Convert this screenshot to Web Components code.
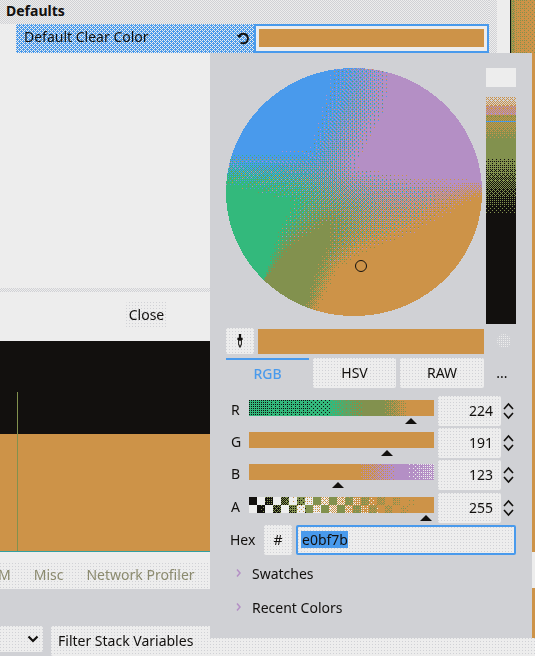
<!DOCTYPE html>
<html>
<head>
<meta charset="utf-8">
<style>
	html, body { margin: 0; height: 656px; overflow: hidden; }
	body {
		position: relative;
		background: #d0d1d5;
		color: #12100e;
		font: 14px "Noto Sans", "Liberation Sans", sans-serif;
	}
</style>
</head>
<body>
	<editor-back></editor-back>
	<color-picker></color-picker>

<script>
const COLORS = {
	g: "#33b97c", o: "#82914e", y: "#cd9348", p: "#b48fc5",
	b: "#499aec", k: "#12100e", l: "#ededed", s: "#d0d1d5"
}
const B4 = [0,8,2,10,12,4,14,6,3,11,1,9,15,7,13,5]
const bayer = (x, y) => (B4[(y % 4) * 4 + x % 4] + .5) / 16
const dot = c => `conic-gradient(at 1px 1px, transparent 270deg, ${c} 270deg)`
const SPECK = `${dot("#d0d1d5")} 0 0/3px 3px, #ededed`
const CHECK = (a, b) => `${dot(b)} 0 0/2px 2px, ${dot(b)} 1px 1px/2px 2px, ${a}`

// every strip is a list of segments: from to colourA colourB chanceStart chanceEnd
const STRIPS = {
	red: "0 .44 g k .25 .12;.44 .62 g o .1 1;.62 .73 o o 0 0;.73 .86 o y 0 1;.86 1 y y 0 0",
	green: "0 1 y y 0 0",
	blue: "0 .58 y y 0 0;.58 .8 y p 0 1;.8 .86 p p 0 0;.86 1 p l .05 .35",
	value: "0 .04 s y .3 .6;.04 .08 y p .4 .6;.08 .105 o y .4 .5;.105 .11 b b 0 0;.11 .2 o y .55 0;.2 .27 o o 0 0;.27 .53 o k .12 1;.53 1 k k 0 0",
	edge: "0 .05 k k 0 0;.05 .2 o y .1 .6;.2 1 y o .2 .12",
	selected: "0 1 b l .38 .38"
}

class DitherStrip extends HTMLElement {
	connectedCallback() {
		const w = +this.getAttribute("w"), h = +this.getAttribute("h")
		const vertical = this.hasAttribute("vertical")
		const segs = STRIPS[this.getAttribute("kind")].split(";").map(s => s.split(" "))
		this.attachShadow({ mode: "open" }).innerHTML = `
			<style>:host { display: block; } canvas { display: block; }</style>
			<canvas width="${w}" height="${h}"></canvas>`
		const ctx = this.shadowRoot.querySelector("canvas").getContext("2d")
		for (let y = 0; y < h; y++) for (let x = 0; x < w; x++) {
			const f = vertical ? (y + .5) / h : (x + .5) / w
			const seg = segs.find(s => f < +s[1]) || segs[segs.length - 1]
			const t = (f - seg[0]) / (seg[1] - seg[0])
			const chance = +seg[4] + (seg[5] - seg[4]) * t
			ctx.fillStyle = COLORS[bayer(x, y) < chance ? seg[3] : seg[2]]
			ctx.fillRect(x, y, 1, 1)
		}
	}
}
customElements.define("dither-strip", DitherStrip)

// checker behind the alpha slider, fading into the picked colour
class AlphaStrip extends HTMLElement {
	connectedCallback() {
		this.attachShadow({ mode: "open" }).innerHTML = `
			<style>:host { display: block; } canvas { display: block; }</style>
			<canvas width="185" height="16"></canvas>`
		const ctx = this.shadowRoot.querySelector("canvas").getContext("2d")
		for (let y = 0; y < 16; y++) for (let x = 0; x < 185; x++) {
			const dark = ((x >> 3) + (y >> 3)) % 2 == 0
			const f = x / 185, d = bayer(x, y)
			let c
			if (dark) {
				if (f < .42) c = d < (f - .04) / .28 ? "o" : "k"
				else c = d < (f - .5) / .4 ? "y" : "o"
			} else {
				c = d < (f - .22) / .5 ? "y" : "l"
			}
			ctx.fillStyle = COLORS[c]
			ctx.fillRect(x, y, 1, 1)
		}
	}
}
customElements.define("alpha-strip", AlphaStrip)

// solid patches traced from the wheel, pixels between them get dithered
const PATCHES = [
	["b", [[350,50],[330,150],[290,290],[90,300],[0,300],[0,0],[350,0]]],
	["p", [[555,70],[545,180],[450,340],[560,360],[820,385],[900,385],[900,0],[555,0]]],
	["y", [[320,790],[390,660],[480,610],[620,560],[800,450],[900,450],[900,900],[320,900]]],
	["o", [[170,680],[240,600],[350,530],[340,590],[300,680],[280,770],[280,900],[100,900]]],
	["g", [[0,400],[240,460],[200,530],[160,680],[0,680]]]
]

function patchDist(px, py, pts) {
	let inside = false, best = 1e9
	for (let i = 0, j = pts.length - 1; i < pts.length; j = i++) {
		const [ax, ay] = pts[i], [bx, by] = pts[j]
		if ((ay > py) != (by > py) && px < (bx - ax) * (py - ay) / (by - ay) + ax) inside = !inside
		const dx = bx - ax, dy = by - ay
		const u = Math.max(0, Math.min(1, ((px - ax) * dx + (py - ay) * dy) / (dx * dx + dy * dy)))
		best = Math.min(best, Math.hypot(px - ax - u * dx, py - ay - u * dy))
	}
	return inside ? 0 : best
}

class ColorWheel extends HTMLElement {
	connectedCallback() {
		this.attachShadow({ mode: "open" }).innerHTML = `
			<style>
				:host { display: block; position: relative; width: 256px; height: 248px; }
				canvas { display: block; }
				i {
					position: absolute; left: 129px; top: 192px;
					width: 10px; height: 10px;
					border: 1px solid #12100e; border-radius: 50%;
				}
			</style>
			<canvas width="256" height="248"></canvas><i></i>`
		const ctx = this.shadowRoot.querySelector("canvas").getContext("2d")
		for (let y = 0; y < 248; y++) for (let x = 0; x < 256; x++) {
			if (Math.hypot((x + .5 - 128) / 128, (y + .5 - 124) / 124) > 1) continue
			const zx = 48 + 3 * x, zy = 54 + 3 * y
			const dist = PATCHES.map(p => patchDist(zx, zy, p[1]))
			const hit = dist.indexOf(0)
			let pick = hit
			if (hit < 0) {
				const weights = dist.map(d => 1 / Math.pow(d, 1.5))
				const total = weights.reduce((a, b) => a + b)
				let run = 0, d = bayer(x, y)
				pick = weights.findIndex(w => (run += w / total) > d)
				if (pick < 0) pick = 4
			}
			ctx.fillStyle = COLORS[PATCHES[pick][0]]
			ctx.fillRect(x, y, 1, 1)
		}
	}
}
customElements.define("color-wheel", ColorWheel)

class SliderRow extends HTMLElement {
	connectedCallback() {
		const label = this.getAttribute("label")
		const value = this.getAttribute("value")
		const kind = this.getAttribute("kind")
		const grabber = this.getAttribute("grabber")
		const strip = kind == "alpha" ? `<alpha-strip></alpha-strip>` : `<dither-strip kind="${kind}" w="185" h="16"></dither-strip>`
		this.attachShadow({ mode: "open" }).innerHTML = `
			<style>
				:host {
					display: grid;
					grid-template-columns: 19px 185px 63px 13px;
					column-gap: 4px;
					height: 30px;
				}
				.track { position: relative; height: 16px; margin-top: 4px; }
				.track i {
					position: absolute; top: 18px; left: ${grabber}px;
					width: 0; height: 0;
					border: 6px solid transparent; border-top: 0;
					border-bottom: 6px solid #12100e;
				}
				label { padding-left: 5px; line-height: 27px; }
				.num {
					height: 30px; box-sizing: border-box;
					padding: 0 8px 2px 0;
					display: flex; align-items: center; justify-content: flex-end;
					background: ${SPECK}; border-radius: 2px;
				}
				svg { display: block; margin: 5px 0 0 -3px; }
			</style>
			<label>${label}</label>
			<div class="track">${strip}<i></i></div>
			<div class="num">${value}</div>
			<svg width="13" height="20" viewBox="0 0 13 20" fill="none" stroke="#12100e" stroke-width="1.600">
				<path d="M2 8 6.500 3 11 8M2 12l4.500 5 4.500-5"/>
			</svg>`
	}
}
customElements.define("slider-row", SliderRow)

class CollapseRow extends HTMLElement {
	connectedCallback() {
		this.attachShadow({ mode: "open" }).innerHTML = `
			<style>
				:host { display: flex; align-items: center; height: 34px; gap: 10px; padding-left: 10px; }
				svg { display: block; }
			</style>
			<svg width="6" height="10" viewBox="0 0 6 10" fill="none" stroke="#b48fc5" stroke-width="1.500">
				<path d="M1 1.500 4 5 1 8.500"/>
			</svg>
			<slot></slot>`
	}
}
customElements.define("collapse-row", CollapseRow)

class ColorPicker extends HTMLElement {
	connectedCallback() {
		this.attachShadow({ mode: "open" }).innerHTML = `
			<style>
				:host {
					position: absolute; left: 210px; top: 53px;
					width: 322px; height: 585px;
					box-sizing: border-box;
					padding: 15px 16px 0;
					background: #d0d1d5;
					display: block;
				}
				.top { display: grid; grid-template-columns: 256px 30px; column-gap: 4px; height: 256px; }
				.value { display: flex; flex-direction: column; }
				.white { height: 19px; margin-bottom: 10px; background: #ededed; }
				.current {
					display: grid; grid-template-columns: 28px 226px 1fr;
					column-gap: 4px; align-items: center;
					height: 26px; margin-top: 4px;
				}
				.pick {
					height: 26px; background: ${SPECK}; border-radius: 2px;
					display: flex; align-items: center; justify-content: center;
				}
				.swatch { height: 25px; background: #cd9348; }
				.dots {
					width: 14px; height: 14px; margin-left: 9px;
					background: ${dot("#ededed")} 0 0/2px 2px;
					border-radius: 50%;
				}
				.tabs {
					display: grid; grid-template-columns: 83px 83px 84px 1fr;
					column-gap: 4px; height: 30px; margin-top: 4px;
				}
				.tab {
					display: flex; align-items: center; justify-content: center;
					padding-bottom: 2px; box-sizing: border-box;
					background: ${SPECK}; border-radius: 2px;
				}
				.tab.on {
					background: none; color: #499aec; font-weight: 500;
					border-top: 2px solid #499aec; border-radius: 0; padding-bottom: 2px;
				}
				.more { display: flex; align-items: center; justify-content: center; padding-bottom: 2px; }
				.sliders { display: flex; flex-direction: column; gap: 2px; margin-top: 8px; }
				.sliders slider-row:last-child { margin-top: 1px; }
				.hex {
					display: grid; grid-template-columns: 30px 28px 220px;
					column-gap: 4px; align-items: center;
					height: 30px; margin-top: 2px; margin-left: 4px;
				}
				.hex > span { padding-bottom: 2px; }
				.hash {
					height: 30px; padding-bottom: 2px; box-sizing: border-box;
					display: flex; align-items: center; justify-content: center;
					background: ${SPECK}; border-radius: 2px;
				}
				.field {
					height: 30px; box-sizing: border-box;
					border: 2px solid #499aec; border-radius: 2px;
					background: ${SPECK};
					padding: 0 0 1px 3px;
					display: flex; align-items: center;
				}
				.field span { background: #499aec; line-height: 17px; padding: 0 0 0 1px; }
				.fold { margin-top: 1px; }
			</style>
			<div class="top">
				<color-wheel></color-wheel>
				<div class="value">
					<div class="white"></div>
					<dither-strip kind="value" vertical w="30" h="227"></dither-strip>
				</div>
			</div>
			<div class="current">
				<div class="pick">
					<svg width="6" height="16" viewBox="0 0 8 19">
						<path d="M2.500 0h3v5H7.500v3H6.500v6L4 19 1.500 14V8H.5V5h2z" fill="#12100e"/>
						<path d="M2.800 9h2.400v4.500L4 16l-1.200-2.500z" fill="#ededed"/>
					</svg>
				</div>
				<div class="swatch"></div>
				<div class="dots"></div>
			</div>
			<div class="tabs">
				<div class="tab on">RGB</div>
				<div class="tab">HSV</div>
				<div class="tab">RAW</div>
				<div class="more">...</div>
			</div>
			<div class="sliders">
				<slider-row label="R" value="224" kind="red" grabber="156"></slider-row>
				<slider-row label="G" value="191" kind="green" grabber="132"></slider-row>
				<slider-row label="B" value="123" kind="blue" grabber="83"></slider-row>
				<slider-row label="A" value="255" kind="alpha" grabber="171"></slider-row>
			</div>
			<div class="hex">
				<span>Hex</span>
				<div class="hash">#</div>
				<div class="field"><span>e0bf7b</span></div>
			</div>
			<div class="fold">
				<collapse-row>Swatches</collapse-row>
				<collapse-row>Recent Colors</collapse-row>
			</div>`
	}
}
customElements.define("color-picker", ColorPicker)

class EditorBack extends HTMLElement {
	connectedCallback() {
		this.attachShadow({ mode: "open" }).innerHTML = `
			<style>
				:host { display: grid; grid-template-columns: 510px 25px; height: 656px; }
				.main { display: flex; flex-direction: column; min-width: 0; }
				.settings { display: grid; grid-template-columns: 489px 8px 13px; height: 53px; }
				.rows { display: flex; flex-direction: column; }
				.head {
					height: 24px; padding: 0 0 3px 6px; font-weight: 700; box-sizing: border-box;
					display: flex; align-items: center;
					background: ${CHECK("#ededed", "#d0d1d5")};
				}
				.row { display: flex; height: 29px; background: #ededed; padding-left: 16px; }
				.name { width: 238px; display: grid; }
				.name > * { grid-area: 1 / 1; }
				.label {
					box-sizing: border-box; padding: 0 4px 5px 8px;
					display: flex; align-items: center; justify-content: space-between;
					position: relative;
				}
				.label svg { margin-top: 4px; }
				.button {
					flex: 1; box-sizing: border-box;
					border: 2px solid #499aec; background: #ededed; padding: 3px;
				}
				.button div { height: 18px; background: #cd9348; }
				.gutter { background: ${CHECK("#ededed", "#d0d1d5")}; }
				.scroll { background: #ededed; }
				.blank { height: 235px; background: #ededed; }
				.sep { height: 4px; background: ${CHECK("#d0d1d5", "#ededed")}; }
				.actions {
					height: 49px; background: #ededed;
					display: flex; align-items: center; justify-content: center;
					width: 293px; padding-bottom: 3px; box-sizing: border-box;
				}
				.close {
					width: 42px; height: 26px; padding-bottom: 2px; box-sizing: border-box;
					display: flex; align-items: center; justify-content: center;
					background: ${SPECK}; border-radius: 2px;
				}
				.view { height: 211px; position: relative; background: #12100e; }
				.view .ground { position: absolute; left: 0; right: 0; top: 93px; bottom: 1px; background: #cd9348; }
				.view .axis { position: absolute; left: 17px; top: 51px; bottom: 1px; width: 1px; background: #82914e; }
				.view .line { position: absolute; left: 0; right: 0; bottom: 0; height: 1px; background: #33a0a0; }
				.gap { height: 11px; background: #ededed; }
				.tabs {
					height: 26px; background: ${SPECK}; color: #8b8a6e;
					padding-bottom: 3px; box-sizing: border-box;
					display: flex; align-items: center; gap: 23px;
				}
				.tabs span:first-child { margin-left: -2px; }
				.bottom { flex: 1; display: flex; align-items: flex-start; gap: 8px; padding-top: 37px; background: #d0d1d5; }
				.drop {
					width: 43px; height: 26px; background: ${SPECK}; border-radius: 0 2px 2px 0;
					display: flex; align-items: center; justify-content: flex-end; padding-right: 4px; box-sizing: border-box;
				}
				.filter {
					flex: 1; height: 30px; padding: 0 0 2px 7px; box-sizing: border-box;
					display: flex; align-items: center;
					background: ${SPECK}; border-radius: 2px;
				}
				.side { background: #cd9348; display: flex; flex-direction: column; }
				.side .fill { height: 499px; }
				.side .low { height: 36px; background: #ededed; }
				.strip { position: absolute; left: 210px; right: 0; top: 638px; height: 18px; background: ${SPECK}; }
			</style>
			<div class="main">
				<div class="settings">
					<div class="rows">
						<div class="head">Defaults</div>
						<div class="row">
							<div class="name">
								<dither-strip kind="selected" w="238" h="29"></dither-strip>
								<div class="label">Default Clear Color
									<svg width="14" height="14" viewBox="0 0 14 14" fill="none" stroke="#12100e" stroke-width="2">
										<path d="M4.500 11.500A4.800 4.800 0 1 0 2.800 5.500"/>
										<path d="M.5 3.500 3 7l3-2z" fill="#12100e" stroke="none"/>
									</svg>
								</div>
							</div>
							<div class="button"><div></div></div>
						</div>
					</div>
					<div class="gutter"></div>
					<div class="scroll"></div>
				</div>
				<div class="blank"></div>
				<div class="sep"></div>
				<div class="actions"><div class="close">Close</div></div>
				<div class="view"><div class="ground"></div><div class="axis"></div><div class="line"></div></div>
				<div class="gap"></div>
				<div class="tabs"><span>M</span><span>Misc</span><span>Network Profiler</span></div>
				<div class="bottom">
					<div class="drop">
						<svg width="12" height="8" viewBox="0 0 12 8" fill="none" stroke="#12100e" stroke-width="2.200">
							<path d="M1.500 1.500 6 6l4.500-4.500"/>
						</svg>
					</div>
					<div class="filter">Filter Stack Variables</div>
				</div>
			</div>
			<div class="side">
				<dither-strip kind="edge" w="25" h="53"></dither-strip>
				<div class="fill"></div>
				<div class="low"></div>
			</div>
			<div class="strip"></div>`
	}
}
customElements.define("editor-back", EditorBack)
</script>
</body>
</html>
